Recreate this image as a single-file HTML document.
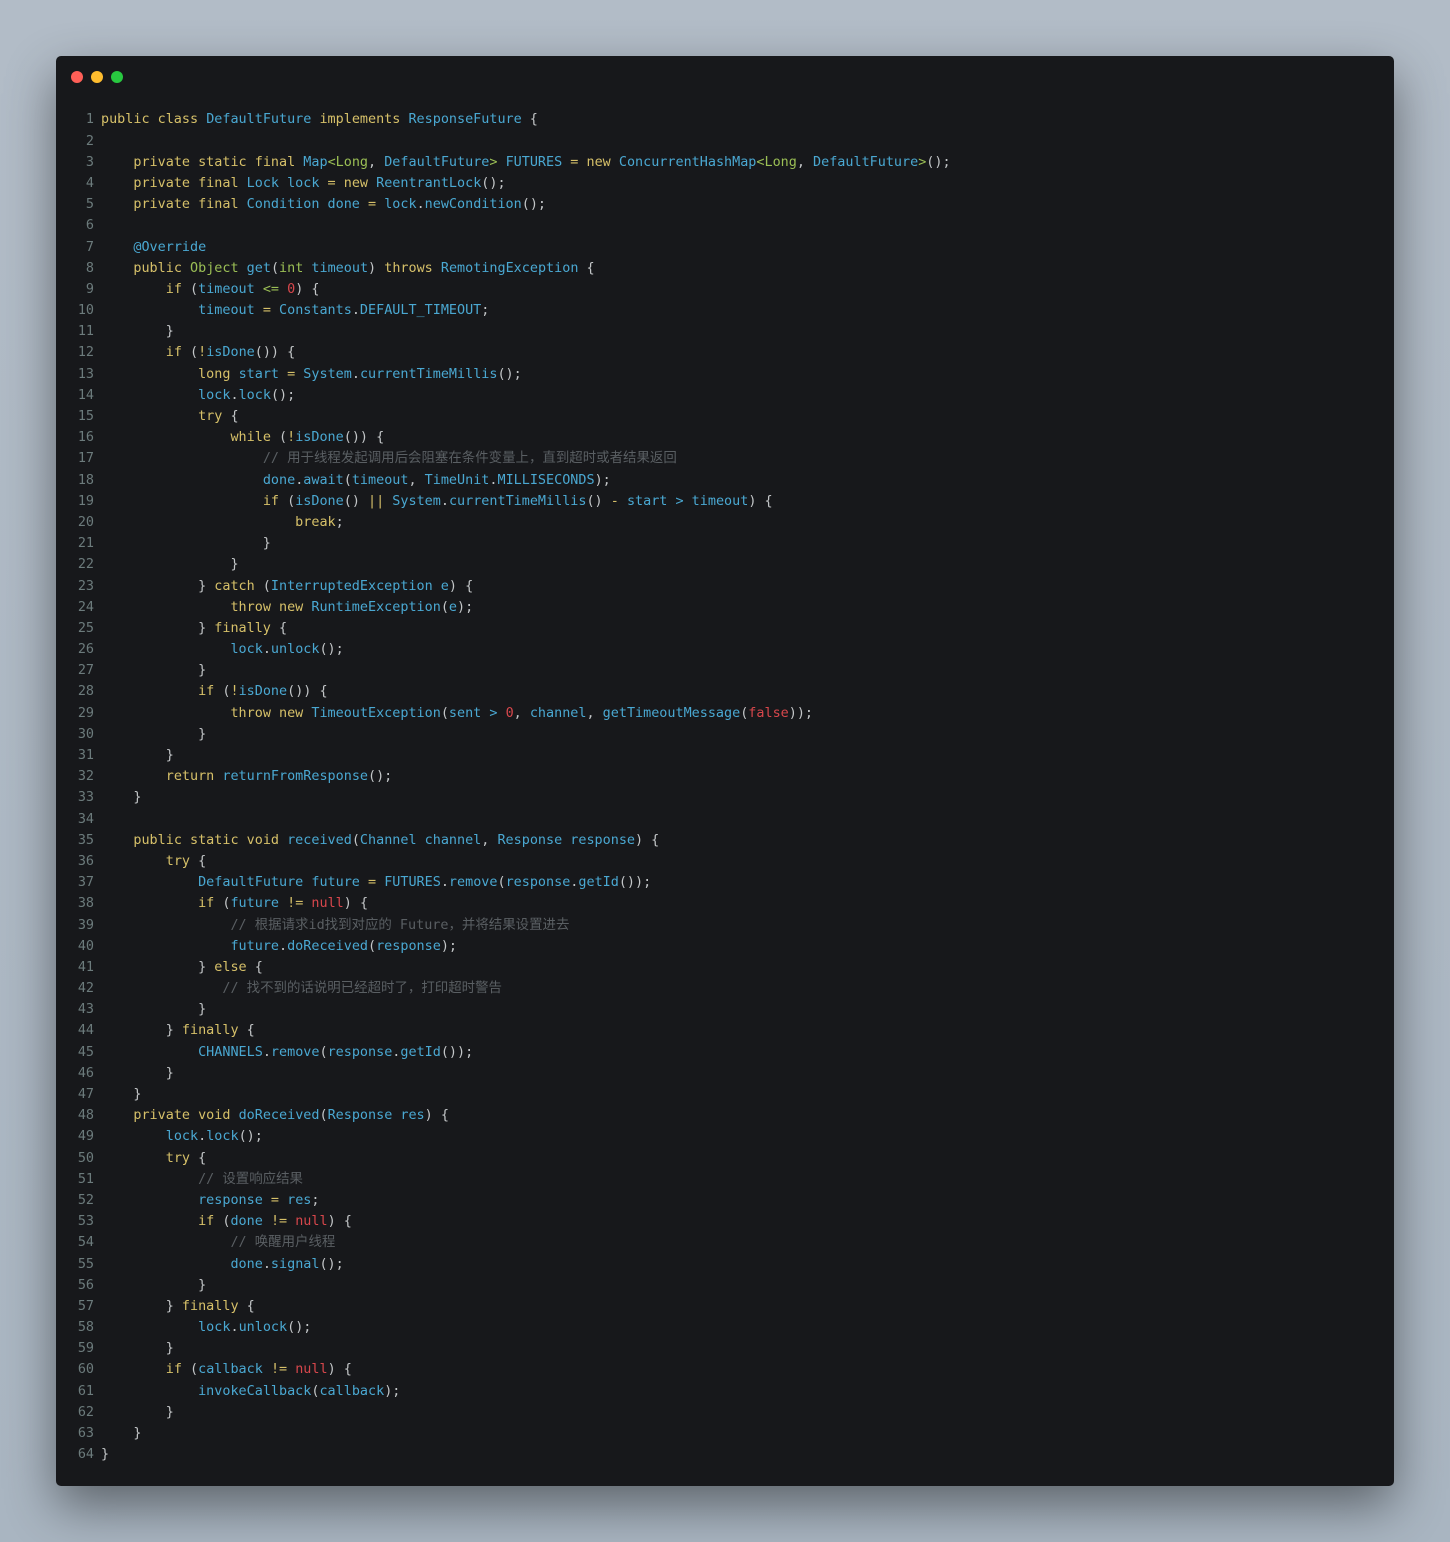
<!DOCTYPE html>
<html><head><meta charset="utf-8"><style>
html,body{margin:0;padding:0;}
body{width:1450px;height:1542px;background:linear-gradient(180deg,#b2bcc7 0%,#a9b5c1 100%);position:relative;overflow:hidden;font-family:"DejaVu Sans Mono","Noto Sans CJK SC",monospace;}
.win{position:absolute;left:56px;top:56px;width:1338px;height:1430px;background:#17181b;border-radius:5px;box-shadow:0 20px 50px rgba(0,0,0,.45);}
.dot{position:absolute;top:15px;width:12px;height:12px;border-radius:50%;}
.code{position:absolute;left:0;top:53.4px;font-size:13.45px;color:#c3c6c8;}
.l{height:21.19px;line-height:21.19px;white-space:pre;overflow:hidden;}
.n{display:inline-block;width:38px;text-align:right;color:#6c7b7c;margin-right:7px;}
.k{color:#d6c069}.t{color:#4aa8d2}.c{color:#5a5f63}.r{color:#d8474c}.g{color:#9bbf55}
</style></head><body>
<div class="win">
<div class="dot" style="left:15px;background:#fe5f57"></div>
<div class="dot" style="left:35px;background:#febc2e"></div>
<div class="dot" style="left:55px;background:#28c840"></div>
<div class="code"><div class="l"><span class="n">1</span><span class="k">public class</span> <span class="t">DefaultFuture</span> <span class="k">implements</span> <span class="t">ResponseFuture</span> {</div><div class="l"><span class="n">2</span></div><div class="l"><span class="n">3</span>    <span class="k">private static final</span> <span class="t">Map</span><span class="g">&lt;Long</span>, <span class="t">DefaultFuture</span><span class="g">&gt;</span> <span class="t">FUTURES</span> <span class="k">=</span> <span class="k">new</span> <span class="t">ConcurrentHashMap</span><span class="g">&lt;Long</span>, <span class="t">DefaultFuture</span><span class="g">&gt;</span>();</div><div class="l"><span class="n">4</span>    <span class="k">private final</span> <span class="t">Lock lock</span> <span class="k">=</span> <span class="k">new</span> <span class="t">ReentrantLock</span>();</div><div class="l"><span class="n">5</span>    <span class="k">private final</span> <span class="t">Condition done</span> <span class="k">=</span> <span class="t">lock</span>.<span class="t">newCondition</span>();</div><div class="l"><span class="n">6</span></div><div class="l"><span class="n">7</span>    <span class="t">@Override</span></div><div class="l"><span class="n">8</span>    <span class="k">public</span> <span class="g">Object</span> <span class="t">get</span>(<span class="g">int</span> <span class="t">timeout</span>) <span class="k">throws</span> <span class="t">RemotingException</span> {</div><div class="l"><span class="n">9</span>        <span class="k">if</span> (<span class="t">timeout</span> <span class="g">&lt;=</span> <span class="r">0</span>) {</div><div class="l"><span class="n">10</span>            <span class="t">timeout</span> <span class="k">=</span> <span class="t">Constants</span>.<span class="t">DEFAULT_TIMEOUT</span>;</div><div class="l"><span class="n">11</span>        }</div><div class="l"><span class="n">12</span>        <span class="k">if</span> (<span class="k">!</span><span class="t">isDone</span>()) {</div><div class="l"><span class="n">13</span>            <span class="k">long</span> <span class="t">start</span> <span class="k">=</span> <span class="t">System</span>.<span class="t">currentTimeMillis</span>();</div><div class="l"><span class="n">14</span>            <span class="t">lock</span>.<span class="t">lock</span>();</div><div class="l"><span class="n">15</span>            <span class="k">try</span> {</div><div class="l"><span class="n">16</span>                <span class="k">while</span> (<span class="k">!</span><span class="t">isDone</span>()) {</div><div class="l"><span class="n">17</span>                    <span class="c">// 用于线程发起调用后会阻塞在条件变量上，直到超时或者结果返回</span></div><div class="l"><span class="n">18</span>                    <span class="t">done</span>.<span class="t">await</span>(<span class="t">timeout</span>, <span class="t">TimeUnit</span>.<span class="t">MILLISECONDS</span>);</div><div class="l"><span class="n">19</span>                    <span class="k">if</span> (<span class="t">isDone</span>() <span class="k">||</span> <span class="t">System</span>.<span class="t">currentTimeMillis</span>() <span class="k">-</span> <span class="t">start</span> <span class="t">&gt;</span> <span class="t">timeout</span>) {</div><div class="l"><span class="n">20</span>                        <span class="k">break</span>;</div><div class="l"><span class="n">21</span>                    }</div><div class="l"><span class="n">22</span>                }</div><div class="l"><span class="n">23</span>            } <span class="k">catch</span> (<span class="t">InterruptedException e</span>) {</div><div class="l"><span class="n">24</span>                <span class="k">throw new</span> <span class="t">RuntimeException</span>(<span class="t">e</span>);</div><div class="l"><span class="n">25</span>            } <span class="k">finally</span> {</div><div class="l"><span class="n">26</span>                <span class="t">lock</span>.<span class="t">unlock</span>();</div><div class="l"><span class="n">27</span>            }</div><div class="l"><span class="n">28</span>            <span class="k">if</span> (<span class="k">!</span><span class="t">isDone</span>()) {</div><div class="l"><span class="n">29</span>                <span class="k">throw new</span> <span class="t">TimeoutException</span>(<span class="t">sent</span> <span class="t">&gt;</span> <span class="r">0</span>, <span class="t">channel</span>, <span class="t">getTimeoutMessage</span>(<span class="r">false</span>));</div><div class="l"><span class="n">30</span>            }</div><div class="l"><span class="n">31</span>        }</div><div class="l"><span class="n">32</span>        <span class="k">return</span> <span class="t">returnFromResponse</span>();</div><div class="l"><span class="n">33</span>    }</div><div class="l"><span class="n">34</span></div><div class="l"><span class="n">35</span>    <span class="k">public static void</span> <span class="t">received</span>(<span class="t">Channel channel</span>, <span class="t">Response response</span>) {</div><div class="l"><span class="n">36</span>        <span class="k">try</span> {</div><div class="l"><span class="n">37</span>            <span class="t">DefaultFuture future</span> <span class="k">=</span> <span class="t">FUTURES</span>.<span class="t">remove</span>(<span class="t">response</span>.<span class="t">getId</span>());</div><div class="l"><span class="n">38</span>            <span class="k">if</span> (<span class="t">future</span> <span class="k">!=</span> <span class="r">null</span>) {</div><div class="l"><span class="n">39</span>                <span class="c">// 根据请求id找到对应的 Future，并将结果设置进去</span></div><div class="l"><span class="n">40</span>                <span class="t">future</span>.<span class="t">doReceived</span>(<span class="t">response</span>);</div><div class="l"><span class="n">41</span>            } <span class="k">else</span> {</div><div class="l"><span class="n">42</span>               <span class="c">// 找不到的话说明已经超时了，打印超时警告</span></div><div class="l"><span class="n">43</span>            }</div><div class="l"><span class="n">44</span>        } <span class="k">finally</span> {</div><div class="l"><span class="n">45</span>            <span class="t">CHANNELS</span>.<span class="t">remove</span>(<span class="t">response</span>.<span class="t">getId</span>());</div><div class="l"><span class="n">46</span>        }</div><div class="l"><span class="n">47</span>    }</div><div class="l"><span class="n">48</span>    <span class="k">private void</span> <span class="t">doReceived</span>(<span class="t">Response res</span>) {</div><div class="l"><span class="n">49</span>        <span class="t">lock</span>.<span class="t">lock</span>();</div><div class="l"><span class="n">50</span>        <span class="k">try</span> {</div><div class="l"><span class="n">51</span>            <span class="c">// 设置响应结果</span></div><div class="l"><span class="n">52</span>            <span class="t">response</span> <span class="k">=</span> <span class="t">res</span>;</div><div class="l"><span class="n">53</span>            <span class="k">if</span> (<span class="t">done</span> <span class="k">!=</span> <span class="r">null</span>) {</div><div class="l"><span class="n">54</span>                <span class="c">// 唤醒用户线程</span></div><div class="l"><span class="n">55</span>                <span class="t">done</span>.<span class="t">signal</span>();</div><div class="l"><span class="n">56</span>            }</div><div class="l"><span class="n">57</span>        } <span class="k">finally</span> {</div><div class="l"><span class="n">58</span>            <span class="t">lock</span>.<span class="t">unlock</span>();</div><div class="l"><span class="n">59</span>        }</div><div class="l"><span class="n">60</span>        <span class="k">if</span> (<span class="t">callback</span> <span class="k">!=</span> <span class="r">null</span>) {</div><div class="l"><span class="n">61</span>            <span class="t">invokeCallback</span>(<span class="t">callback</span>);</div><div class="l"><span class="n">62</span>        }</div><div class="l"><span class="n">63</span>    }</div><div class="l"><span class="n">64</span>}</div></div>
</div>
</body></html>
